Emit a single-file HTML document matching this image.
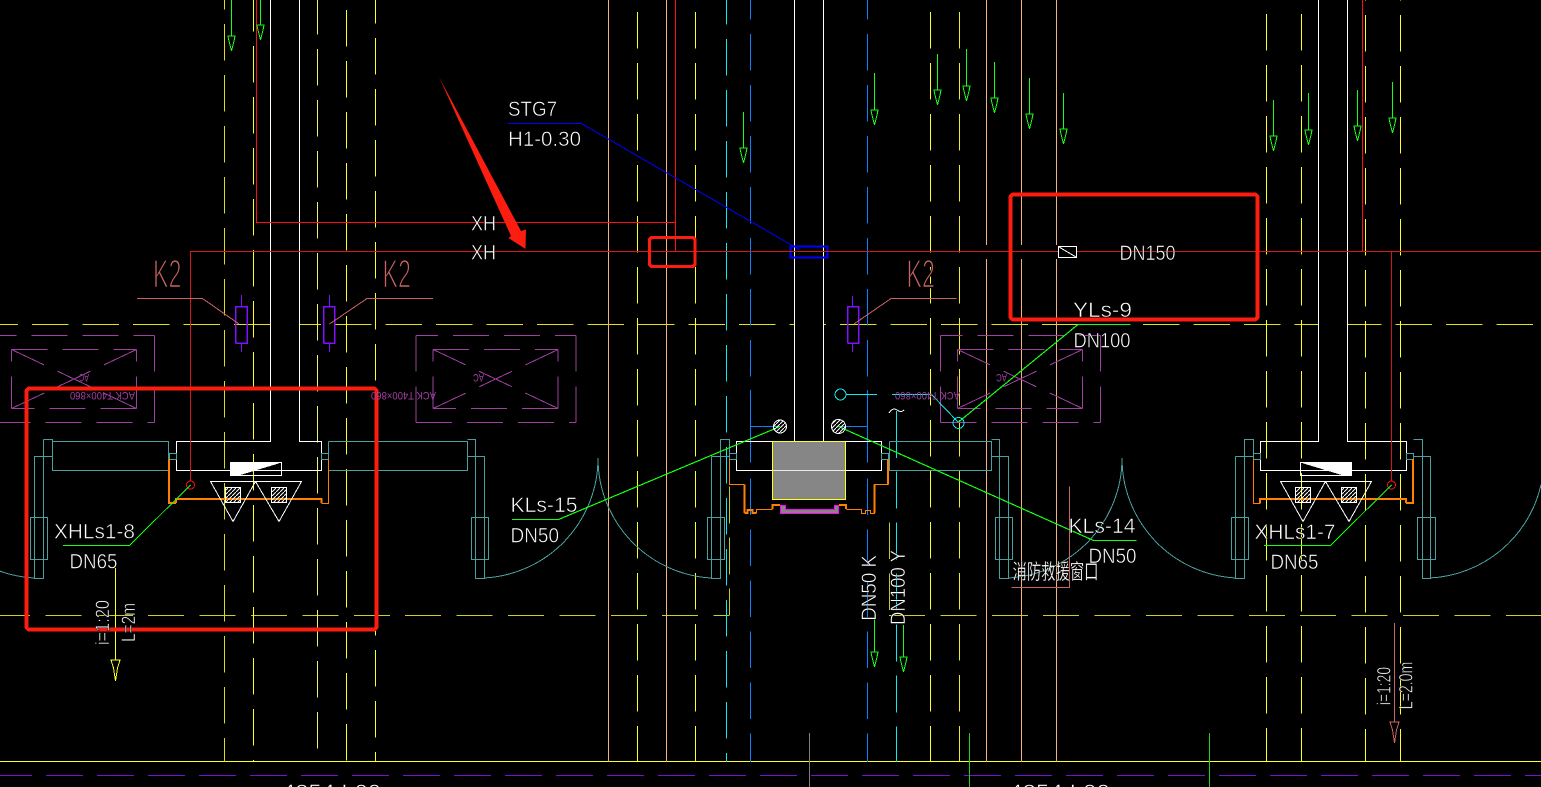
<!DOCTYPE html>
<html lang="zh">
<head>
<meta charset="utf-8">
<title>CAD drawing</title>
<style>
html,body{margin:0;padding:0;background:#000;width:1541px;height:787px;overflow:hidden}
svg{display:block}
text{font-family:"Liberation Sans","WenQuanYi Zen Hei",sans-serif;fill:#fff;stroke:#000;stroke-width:.55}
.k text{fill:#c86464;stroke:#000;stroke-width:1.5}
.m text{fill:#a040a0;stroke:none}
.l{fill:none;stroke-width:1}
</style>
</head>
<body>
<svg width="1541" height="787" viewBox="0 0 1541 787" xmlns="http://www.w3.org/2000/svg">
<defs>
<path id="ah" d="M-3.5 0H3.5L2.5 5 0 15-2.5 5Z" fill="none"/>
<pattern id="hatch" width="4" height="4" patternUnits="userSpaceOnUse"><path d="M0 4L4 0" stroke="#fff" stroke-width="1"/></pattern>
<g id="ac" fill="none" stroke="#a040a0">
<path stroke-dasharray="22 15 36 15 36 15 36 15 36 15" d="M-5.5 335.5H154.5"/>
<path stroke-dasharray="36 15" d="M154.5 335.5V422.5"/>
<path stroke-dasharray="36 15" d="M-5.5 422.5H154.5"/>
<path stroke-dasharray="36 15" d="M-5.5 335.5V422.5"/>
<path stroke-dasharray="36 15" d="M11.5 349.5H136.5"/>
<path stroke-dasharray="36 15" d="M136.5 408.5H11.5"/>
<path stroke-dasharray="12 15 36 15" d="M11.5 349.5V408.5"/>
<path stroke-dasharray="12 15 36 15" d="M136.5 349.5V408.5"/>
<path stroke-dasharray="36 15" d="M11.5 349.5L136.5 408.5"/>
<path stroke-dasharray="36 15" d="M136.5 349.5L11.5 408.5"/>
</g>
</defs>
<rect width="1541" height="787" fill="#000"/>
<g shape-rendering="crispEdges" class="l">

<!-- horizontal yellow axes -->
<path fill="none" stroke="#e2e214" stroke-dasharray="36.5 14" d="M-18.5 324.5H1541"/>
<rect x="271" y="323" width="28" height="3" fill="#000"/>
<rect x="795" y="323" width="28" height="3" fill="#000"/>
<rect x="1319" y="323" width="28" height="3" fill="#000"/>
<path fill="none" stroke="#cfcf1e" stroke-dasharray="36 15.4" d="M-6 615.5H729.5"/>
<path fill="none" stroke="#cfcf1e" stroke-dasharray="36 15.4" d="M889 615.5H1541"/>
<path fill="none" stroke="#ffff20" d="M0 761.5H1541"/>
<path fill="none" stroke="#7a10d8" stroke-dasharray="37 14" d="M-5 775.5H1541"/>

<!-- yellow dashed verticals -->
<g fill="none" stroke-dasharray="36.7 14.3">
<path stroke="#dcdc1c" d="M224.5 -27V762"/>
<path stroke="#ffff20" d="M253.5 -5V762"/>
<path stroke="#f0f070" d="M317.5 -2V762"/>
<path stroke="#ffff20" d="M346.5 -41V762"/>
<path stroke="#ffff20" d="M375.5 -13V762"/>
<path stroke="#ffff20" d="M637.5 -39V762"/>
<path stroke="#ffff20" d="M695.5 -39V762"/>
<path stroke="#ffff20" d="M930.5 -39V762"/>
<path stroke="#eded20" d="M959.5 -39V762"/>
<path stroke="#ffff20" d="M1266.5 -37V762"/>
<path stroke="#ffff20" d="M1301.5 -37V762"/>
<path stroke="#ffff20" d="M1365.5 -36V762"/>
<path stroke="#ffff20" d="M1400.5 -36V762"/>
<!-- cyan & blue -->
<path stroke="#10e8f0" d="M726.5 -12V762"/>
<path stroke="#0a80ff" d="M750.5 -17V380"/>
<path stroke="#0a80ff" d="M750.5 478.3V762"/>
<path stroke="#0a80ff" d="M867.5 -17V380"/>
<path stroke="#0a80ff" d="M867.5 478.3V762"/>
<path stroke="#10e8f0" d="M896.5 471.7V762"/>
<path stroke="#c8c820" d="M729.5 486.7V615"/>
<path stroke="#c8c820" d="M889.5 522.5V615"/>
</g>
<path fill="none" stroke="#0a80ff" d="M750.5 390V462.7M867.5 390V462.7M750 426.5H780M867 426.5H840"/>
<path fill="none" stroke="#10e8f0" d="M896.5 411V458"/>

<!-- peach solids -->
<path fill="none" stroke="#f4b078" d="M608.5 0V762M666.5 0V762M986.5 0V245M986.5 259V762M1021.5 0V245M1021.5 259V762M1056.5 0V245M1056.5 259V762"/>
<!-- bottom stubs -->
<path fill="none" stroke="#808080" d="M809.5 733V787"/>
<path fill="none" stroke="#18d818" d="M969.5 733V787M1209.5 733V787"/>

<!-- AC boxes -->
<use href="#ac"/>
<use href="#ac" transform="translate(421.6 0)"/>
<use href="#ac" transform="translate(946 0)"/>

<!-- white columns and boxes -->
<path fill="none" stroke="#fff" d="M270.5 0V441.5H176.5V470.5H321.5V441.5H299.5V0"/>
<path fill="none" stroke="#fff" d="M794.5 0V441.5M823.5 0V441.5"/>
<path fill="none" stroke="#fff" d="M736.5 441.5H881.5V470.5H736.5Z"/>
<path fill="none" stroke="#fff" d="M1318.5 0V441.5H1260.5V470.5H1406.5V441.5H1347.5V0"/>
<rect x="772.5" y="441.5" width="73" height="58" fill="#868686" stroke="#ffff20"/>
<path fill="none" stroke="#e8e8e8" d="M773 470.5H845"/>

<!-- doors teal -->
<g fill="none" stroke="#4aa0a0">
<path d="M52.5 441.5H168.5V470.5H52.5V441.5M43.5 439.5H52.5V456.5M43.5 439.5V578.5H34.5V456.5H52.5M30.5 517.5H47.5V559.5H30.5Z"/>
<path d="M34 578 A120 120 0 0 1 -8 568"/>
<rect x="169.5" y="453.5" width="7" height="6"/>
<rect x="321.5" y="453.5" width="7" height="6"/>
<path d="M328.5 441.5H467.5V470.5H328.5V441.5M467.5 439.5H475.5V456.5M475.5 439.5V578.5H484.5V456.5H467.5M471.5 517.5H488.5V559.5H471.5Z"/>
<path d="M484 578 A120 120 0 0 0 598 458V460"/>
<path d="M598 458 A120 120 0 0 0 711 578"/>
<path d="M711.5 456.5H729.5V439.5H720.5V578.5H711.5V456.5M707.5 517.5H724.5V559.5H707.5ZM729.5 439.5V470.5"/>
<rect x="729.5" y="453.5" width="7" height="6"/>
<rect x="881.5" y="453.5" width="7" height="6"/>
<path d="M889.5 441.5H991.5V470.5H889.5V441.5M991.5 439.5H999.5V578.5H1008.5V456.5H991.5M995.5 517.5H1012.5V559.5H995.5Z"/>
<path d="M1008 578 A120 120 0 0 0 1122 458"/>
<path d="M1122 458 A120 120 0 0 0 1236 578"/>
<path d="M1235.5 456.5H1253.5V439.5H1244.5V578.5H1235.5V456.5M1231.5 517.5H1248.5V559.5H1231.5Z"/>
<rect x="1253.5" y="453.5" width="7" height="6"/>
<rect x="1406.5" y="453.5" width="7" height="6"/>
<path d="M1413.5 439.5H1422.5V456.5M1422.5 439.5V578.5H1430.5V456.5H1413.5M1417.5 517.5H1435.5V559.5H1417.5Z"/>
<path d="M1430 578 A120 120 0 0 0 1541 484.7"/>
</g>

<!-- orange -->
<g fill="none" stroke="#ff8000">
<path stroke-width="2" d="M169 459V503H176M176 503V499H321.5V503"/>
<path d="M321.5 503.5H328.5V459"/>
<path d="M1253.5 459V503.5H1260.5"/>
<path stroke-width="2" d="M1260 503V499H1406V503M1406 503H1413V459"/>
<path d="M729.5 459V484.5H744.5"/>
<path stroke-width="2" d="M744.5 484.5V513M744.5 513H747.5V510H752.5V513H756.5"/>
<path d="M756.5 513V509.5H772.5"/>
<path stroke-width="2" d="M772.5 509V505H780M839 505H846V509"/>
<path d="M846.5 509.5H861.5V513.5H865.5V510.5H870.5V513.5H874.5V484.5H888.5"/>
<path stroke-width="2" d="M874.5 513V484.5M888 484.5V459"/>
</g>
<path d="M785.5 505.5H780.5V513.5H838.5V505.5H834.5V509.5H785.5Z" fill="#868686" stroke="#ff00ff" stroke-width="1"/>

<!-- triangles and hatch squares -->
<g fill="none" stroke="#fff">
<path d="M210.5 481.5H301.5L279 521.5 255.5 481.5 233 521.5Z"/>
<rect x="225.5" y="487.5" width="15" height="15" fill="url(#hatch)"/>
<rect x="271.5" y="487.5" width="15" height="15" fill="url(#hatch)"/>
<rect x="230.5" y="462.5" width="51" height="13"/>
<path fill="#fff" d="M230.5 462.5H280L237 475.5H230.5Z"/>
<path d="M1280.5 481.5H1371.5L1349 521.5 1325.5 481.5 1303 521.5Z"/>
<rect x="1295.5" y="487.5" width="15" height="15" fill="url(#hatch)"/>
<rect x="1341.5" y="487.5" width="15" height="15" fill="url(#hatch)"/>
<rect x="1300.5" y="462.5" width="51" height="13"/>
<path fill="#fff" d="M1302 462.5H1351.5V475.5H1345Z"/>
</g>

<!-- red pipes -->
<g fill="none" stroke="#ff1010">
<path stroke-width="1" d="M256.5 0V222.5H675.5V0"/>
<path d="M675.5 222V251"/>
<path stroke="#d81818" d="M190.5 251.5H1541"/>
<path stroke="#d81818" d="M190.5 251V481"/>
<path d="M1362.5 0V251"/>
<path stroke="#c81818" d="M1391.5 251V481"/>
<circle cx="190.5" cy="485" r="4"/>
<circle cx="1391.5" cy="485" r="4"/>
</g>

<!-- valve and leader lines -->
<g fill="none" stroke="#8010ff">
<path d="M241.5 295V306M241.5 343V352M329.5 295V306M329.5 343V352M852.5 296V306M852.5 343V352"/>
<path stroke-width="1.5" d="M235.5 343V306.5H247V343H235.5M323.5 343V306.5H334.5V343H323.5M847.5 343V306.5H858.5V343H847.5"/>
</g>
<g fill="none" stroke="#c86464">
<path d="M137 298.5H202.5L239 324M433 298.5H367L329.5 324M956.5 298.5H891L854 324"/>
<path d="M1011.5 587.5H1069.5V486.5"/>
<path d="M1394.5 623V722"/>
<path d="M1390 722H1399L1396.5 730 1394.5 743 1392.5 730Z"/>
</g>
<path fill="none" stroke="#0000ff" d="M508 123.5H581.5L800 250"/>
<rect x="790.5" y="246.5" width="37" height="11" fill="none" stroke="#0000ff" stroke-width="1.6"/>
<path fill="none" stroke="#0000ff" d="M780 251.5H790M828 251.5H838"/>
<path fill="none" stroke="#d81818" d="M780 251.5H838"/>

<!-- green leaders -->
<g fill="none" stroke="#14ff14">
<path d="M63 545.5H129.5L190.5 485"/>
<path d="M1264 545.5H1330.5L1391.5 485"/>
<path stroke-width="1.2" d="M512 519.5H558.5L780 426.5"/>
<path stroke-width="1.2" d="M1136.5 540.5H1093.5L838.5 426.5"/>
<path stroke-width="1.2" d="M1130.5 324.5H1078L958.5 422"/>
<path d="M231.5 0V36M260.5 0V25M743.5 112V148M874.5 73V110M937.5 54V90M966.5 49V86M994.5 62V98M1029.5 78V114M1063.5 93V129M1273.5 100V136M1308.5 93V130M1357.5 90V126M1392.5 82V118M874.5 615V652M903.5 625V657"/>
<use href="#ah" x="231.5" y="36"/><use href="#ah" x="260.5" y="25"/><use href="#ah" x="743.5" y="148"/>
<use href="#ah" x="874.5" y="110"/><use href="#ah" x="937.5" y="90"/><use href="#ah" x="966.5" y="86"/>
<use href="#ah" x="994.5" y="98"/><use href="#ah" x="1029.5" y="114"/><use href="#ah" x="1063.5" y="129"/>
<use href="#ah" x="1273.5" y="136"/><use href="#ah" x="1308.5" y="130"/><use href="#ah" x="1357.5" y="126"/>
<use href="#ah" x="1392.5" y="118"/><use href="#ah" x="874.5" y="652"/><use href="#ah" x="903.5" y="657"/>
</g>
<g fill="none" stroke="#ffff20">
<path d="M115.5 568V660M111 660H120L117.5 668 115.5 681 113.5 668Z"/>
</g>

<!-- cyan circles -->
<g fill="none" stroke="#10e8f0">
<circle cx="840.5" cy="394.5" r="5.5"/>
<path d="M846 394.5H877"/>
<path d="M892 394.5H931.5L958 422"/>
<circle cx="958.5" cy="423" r="5.5"/>
</g>

<!-- hatched circles -->
<g fill="none" stroke="#fff">
<circle cx="780" cy="426.5" r="6.5" fill="url(#hatch)"/>
<circle cx="838.5" cy="426.5" r="7" fill="url(#hatch)"/>
<path d="M889 413Q893 407 897 410T904 410"/>
<rect x="1058.5" y="246.5" width="18" height="11" fill="#000"/>
<path d="M1059 247L1076 257"/>
</g>

<!-- annotation red marks -->
<g fill="none" stroke="#fb1e10" stroke-width="4">
<rect x="26.5" y="388.5" width="350" height="241" rx="3"/>
<rect x="1010.5" y="194.5" width="247" height="125" rx="3"/>
<rect x="649.5" y="237.5" width="45.5" height="29" rx="3" stroke-width="3.4"/>
</g>
</g>
<polygon points="439,77 521,231 526,229.5 525.5,249 508.5,238 511,236" fill="#fb1e10"/>

<!-- text -->
<g font-size="21.5">
<text x="508" y="116" textLength="49" lengthAdjust="spacingAndGlyphs">STG7</text>
<text x="508" y="146" textLength="73" lengthAdjust="spacingAndGlyphs">H1-0.30</text>
<text x="471" y="230.5" textLength="25" lengthAdjust="spacingAndGlyphs">XH</text>
<text x="471" y="259.5" textLength="25" lengthAdjust="spacingAndGlyphs">XH</text>
<text x="1119.5" y="260" textLength="56" lengthAdjust="spacingAndGlyphs">DN150</text>
<text x="1073" y="317" textLength="59" lengthAdjust="spacingAndGlyphs">YLs-9</text>
<text x="1073.5" y="347.5" textLength="57" lengthAdjust="spacingAndGlyphs">DN100</text>
<text x="54" y="538.5" textLength="81" lengthAdjust="spacingAndGlyphs">XHLs1-8</text>
<text x="69.5" y="568.5" textLength="48" lengthAdjust="spacingAndGlyphs">DN65</text>
<text x="510.5" y="512" textLength="67" lengthAdjust="spacingAndGlyphs">KLs-15</text>
<text x="510.5" y="542.5" textLength="48.5" lengthAdjust="spacingAndGlyphs">DN50</text>
<text x="1068.5" y="533" textLength="67" lengthAdjust="spacingAndGlyphs">KLs-14</text>
<text x="1088.5" y="563" textLength="48" lengthAdjust="spacingAndGlyphs">DN50</text>
<text x="1254.5" y="539" textLength="81" lengthAdjust="spacingAndGlyphs">XHLs1-7</text>
<text x="1270.5" y="569" textLength="48" lengthAdjust="spacingAndGlyphs">DN65</text>
<text transform="translate(876 620.7) rotate(-90)" textLength="65.7" lengthAdjust="spacingAndGlyphs">DN50 K</text>
<text transform="translate(905 625) rotate(-90)" textLength="75" lengthAdjust="spacingAndGlyphs">DN100 Y</text>
<text x="282" y="799" textLength="99" lengthAdjust="spacingAndGlyphs">4254 L00</text>
<text x="1009" y="799" textLength="101" lengthAdjust="spacingAndGlyphs">4254 L00</text>
</g>
<g font-size="19">
<text transform="translate(109 645) rotate(-90)" textLength="45" lengthAdjust="spacingAndGlyphs">i=1:20</text>
<text transform="translate(135 642) rotate(-90)" textLength="39" lengthAdjust="spacingAndGlyphs">L=2m</text>
<text transform="translate(1390.7 705) rotate(-90)" textLength="38" lengthAdjust="spacingAndGlyphs">i=1:20</text>
<text transform="translate(1412.7 709.3) rotate(-90)" textLength="47.6" lengthAdjust="spacingAndGlyphs">L=2.0m</text>
</g>
<g font-size="40" class="k">
<text x="153" y="287.5" textLength="28.5" lengthAdjust="spacingAndGlyphs">K2</text>
<text x="382.5" y="287.5" textLength="28.5" lengthAdjust="spacingAndGlyphs">K2</text>
<text x="906.5" y="287.5" textLength="28.5" lengthAdjust="spacingAndGlyphs">K2</text>
</g>
<text x="1012.5" y="579" font-size="21" textLength="86" lengthAdjust="spacingAndGlyphs" style="stroke-width:.3">消防救援窗口</text>
<g font-size="11" class="m">
<text transform="translate(135 392) rotate(180)" textLength="65" lengthAdjust="spacingAndGlyphs">ACK T400×860</text>
<text transform="translate(436 392) rotate(180)" textLength="65" lengthAdjust="spacingAndGlyphs">ACK T400×860</text>
<text transform="translate(960 392) rotate(180)" textLength="65" lengthAdjust="spacingAndGlyphs">ACK T400×860</text>
<text transform="translate(89 374) rotate(180)" textLength="10" lengthAdjust="spacingAndGlyphs">AC</text>
<text transform="translate(484 374) rotate(180)" textLength="11" lengthAdjust="spacingAndGlyphs">AC</text>
<text transform="translate(1007 374) rotate(180)" textLength="11" lengthAdjust="spacingAndGlyphs">AC</text>
</g>
</svg>
</body>
</html>
